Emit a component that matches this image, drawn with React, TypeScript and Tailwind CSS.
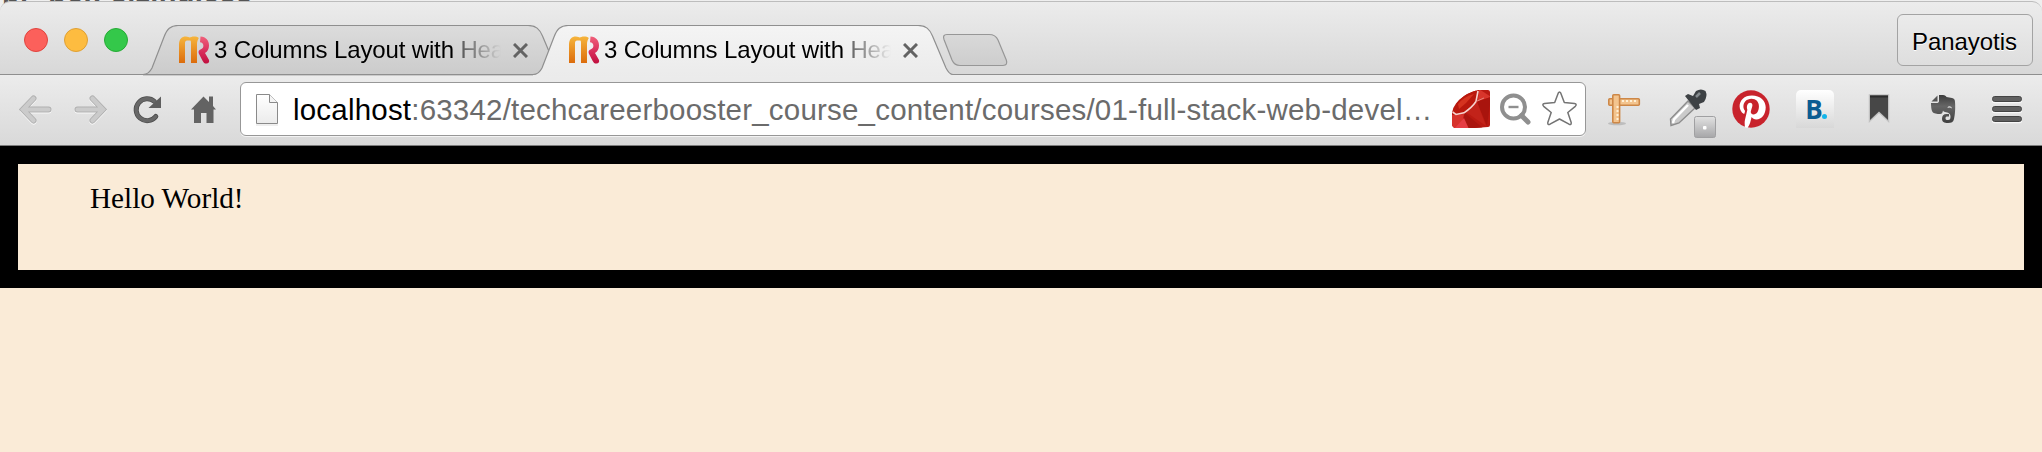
import React from "react";

function Favicon() {
  return (
    <svg className="block h-[28px] w-[31px] shrink-0" viewBox="0 0 31 28">
      <defs>
        <linearGradient id="mo" x1="0" y1="0" x2="0" y2="1">
          <stop offset="0" stopColor="#f6b53c" />
          <stop offset="1" stopColor="#dc6c0c" />
        </linearGradient>
        <linearGradient id="rp" x1="0" y1="0" x2="0" y2="1">
          <stop offset="0" stopColor="#f0607a" />
          <stop offset="0.6" stopColor="#d62a58" />
          <stop offset="1" stopColor="#c0103f" />
        </linearGradient>
      </defs>
      <path
        d="M0 27V8.500C0 3 3 .4 6.800 .4C9 .4 10 1.200 10.700 1.600C11.600 1 13 .4 15 .4C17 .4 18.600 .8 19.800 2C18.600 4 18 6 18 8V27H12V7C12 5 11.600 4.500 11 4.500H8C6.800 4.500 6 5.500 6 7V27Z"
        fill="url(#mo)"
      />
      <path
        d="M21.500 .6C27 1 30 4.500 30 9.500C30 13 28.500 15.600 26 17L30 24C30.600 26 29.500 27.600 27.500 27.600C25.500 27.600 24.500 26.700 23.700 25L19.800 17.500C19 15.500 20 14 21.500 13.500C23.500 12.700 24.400 11.500 24.400 9.700C24.400 7.500 23 6.500 21 6.300Z"
        fill="url(#rp)"
      />
    </svg>
  );
}

function Tab({ active = false }: { active?: boolean }) {
  return (
    <div className={active ? "relative z-10 -ml-[30px] h-[51px] w-[420px]" : "relative h-[51px] w-[420px]"}>
      <svg className="absolute inset-0 h-[51px] w-[420px]" viewBox="0 0 420 51">
        <defs>
          <linearGradient id="tabOff" x1="0" y1="0" x2="0" y2="1">
            <stop offset="0" stopColor="#dcdcdc" />
            <stop offset="1" stopColor="#cbcbcb" />
          </linearGradient>
          <linearGradient id="tabOn" x1="0" y1="0" x2="0" y2="1">
            <stop offset="0" stopColor="#f4f4f4" />
            <stop offset="1" stopColor="#ebebeb" />
          </linearGradient>
        </defs>
        <path
          d="M0 49.500C5 49.500 7 47 9 43L21 12C24 4 27.500 .5 35 .5H385C393 .5 396.500 4 399.500 11L413 43C415 47 417 49.500 420 49.500V51H0Z"
          fill={active ? "url(#tabOn)" : "url(#tabOff)"}
        />
        <path
          d="M0 49.500C5 49.500 7 47 9 43L21 12C24 4 27.500 .5 35 .5H385C393 .5 396.500 4 399.500 11L413 43C415 47 417 49.500 420 49.500"
          fill="none"
          stroke="#8f8f8f"
          strokeWidth="1.200"
        />
        {!active && <path d="M0 49.500H420" stroke="#8f8f8f" strokeWidth="1.200" />}
      </svg>
      <div className="relative flex h-[51px] items-start pl-[36px] pt-[10.5px]">
        <Favicon />
        <span className="ml-[4px] w-[287px] overflow-hidden whitespace-nowrap bg-linear-to-r from-black from-[84%] via-[#00000088] via-[87%] to-transparent bg-clip-text text-[24px] leading-[28px] tracking-[-0.14px] text-transparent">
          3 Columns Layout with Hea
        </span>
        <svg className="ml-[12px] mt-[7px] h-[15px] w-[15px]" viewBox="0 0 15 15">
          <path d="M1 1L14 14M14 1L1 14" stroke="#636363" strokeWidth="3" />
        </svg>
      </div>
    </div>
  );
}

function BackIcon() {
  return (
    <svg className="h-[70px] w-[62px]" viewBox="0 75 62 70">
      <path d="M33.500 98.500L23 109.500L33.500 120.500M24 109.500H48.500" fill="none" stroke="#fafafa" strokeWidth="6" strokeLinecap="round" strokeLinejoin="round" transform="translate(0 1)" />
      <path d="M33.500 98.500L23 109.500L33.500 120.500M24 109.500H48.500" fill="none" stroke="#b0b0b0" strokeWidth="6" strokeLinecap="round" />
      <path d="M33.500 98.500L23 109.500L33.500 120.500M24 109.500H48.500" fill="none" stroke="#cbcbcb" strokeWidth="4.200" strokeLinecap="round" />
    </svg>
  );
}

function ForwardIcon() {
  return (
    <svg className="h-[70px] w-[58px]" viewBox="62 75 58 70">
      <path d="M92.500 98.500L103 109.500L92.500 120.500M102 109.500H77.500" fill="none" stroke="#fafafa" strokeWidth="6" strokeLinecap="round" transform="translate(0 1)" />
      <path d="M92.500 98.500L103 109.500L92.500 120.500M102 109.500H77.500" fill="none" stroke="#b0b0b0" strokeWidth="6" strokeLinecap="round" />
      <path d="M92.500 98.500L103 109.500L92.500 120.500M102 109.500H77.500" fill="none" stroke="#cbcbcb" strokeWidth="4.200" strokeLinecap="round" />
    </svg>
  );
}

function ReloadIcon() {
  return (
    <svg className="h-[70px] w-[56px]" viewBox="120 75 56 70">
      <path d="M155.800 116.500A11 11 0 1 1 154.500 101.500" fill="none" stroke="#4c4c4c" strokeWidth="5" strokeLinecap="round" />
      <path d="M155.800 116.500A11 11 0 1 1 154.500 101.500" fill="none" stroke="#686868" strokeWidth="3.400" strokeLinecap="round" />
      <path d="M161 96.500V108H148.500Z" fill="#5e5e5e" />
    </svg>
  );
}

function HomeIcon() {
  return (
    <svg className="h-[70px] w-[64px]" viewBox="176 75 64 70">
      <path d="M191 109.500L203.500 96.500L209 102V96.500H213V106L216 109.500H213.500V123H206.500V113H201V123H194V109.500Z" fill="#636363" />
    </svg>
  );
}

function PageIcon() {
  return (
    <svg className="h-[34px] w-[26px] shrink-0" viewBox="254 92 26 34">
      <defs>
        <linearGradient id="pg" x1="0" y1="0" x2="0" y2="1">
          <stop offset="0" stopColor="#ffffff" />
          <stop offset="1" stopColor="#ebebeb" />
        </linearGradient>
      </defs>
      <path d="M256 125H278" stroke="#dedede" />
      <path d="M256.500 94.500H269.500L277.500 102.500V123.500H256.500Z" fill="url(#pg)" stroke="#8a8a8a" />
      <path d="M269.500 94.500V102.500H277.500" fill="#f4f4f4" stroke="#8a8a8a" />
    </svg>
  );
}

function OmniboxIcons() {
  return (
    <svg className="h-[50px] w-[140px] shrink-0" viewBox="1445 84 140 50">
      <defs>
        <clipPath id="gem">
          <path d="M1473 91.500L1478 90H1488Q1490 90 1490 92V125Q1490 127 1488 127L1474 128H1455Q1452 127 1452 124V113Q1453 107 1456 103.500Q1463 95 1473 91.500Z" />
        </clipPath>
      </defs>
      <g clipPath="url(#gem)">
        <rect x="1451" y="89" width="40" height="40" fill="#b91a12" />
        <path d="M1452 113L1460 97L1476 90L1477 101L1465 112L1456 114Z" fill="#b9180d" />
        <path d="M1458 104Q1464 96.500 1474 94L1466 103L1459 109Z" fill="#d5331f" />
        <path d="M1479 89L1491 97L1478 101Z" fill="#d8352b" />
        <path d="M1477 102L1491 97L1487 126Z" fill="#a9140d" />
        <path d="M1466 112L1477 102L1486 126Z" fill="#c2231a" />
        <path d="M1465 113L1484 129H1461Z" fill="#aa150f" />
        <path d="M1452 115L1464 114L1461 129H1452Z" fill="#d7332c" />
        <path d="M1454 129L1464 118L1469 129Z" fill="#e63e44" />
        <path d="M1452.500 112L1456 114.500L1464 112.800Q1472 107.500 1476 101.500L1478 91" fill="none" stroke="#f6d3ce" strokeWidth="1.600" />
        <path d="M1476 101.500L1484 98" fill="none" stroke="#e58a80" strokeWidth="1" />
      </g>
      <circle cx="1513.500" cy="107" r="11.500" fill="none" stroke="#8f8f8f" strokeWidth="4" />
      <path d="M1508.500 107H1518.500" stroke="#8f8f8f" strokeWidth="2.400" />
      <path d="M1521.500 115.500L1528 122" stroke="#8f8f8f" strokeWidth="5" strokeLinecap="round" />
      <path
        d="M1558.200 93.200Q1559.500 90.800 1560.800 93.200L1564.300 102.500L1574.500 103.500Q1577.300 104.200 1575.300 106.300L1567.800 112.500L1571.200 122.500Q1571.500 125.400 1569 124.200L1559.500 119L1550 124.200Q1547.500 125.400 1547.800 122.500L1551.200 112.500L1543.700 106.300Q1541.700 104.200 1544.500 103.500L1554.700 102.500Z"
        fill="#fff"
        stroke="#747474"
        strokeWidth="1.500"
        strokeLinejoin="round"
      />
    </svg>
  );
}

function RulerIcon() {
  return (
    <svg className="h-[70px] w-[64px]" viewBox="1592 75 64 70">
      <ellipse cx="1617" cy="123.500" rx="9" ry="1.800" fill="#bdbdbd" />
      <rect x="1608.800" y="98.800" width="30.500" height="6.500" rx="1" fill="#f3c48e" stroke="#cd8747" strokeWidth="1.600" />
      <rect x="1612.800" y="94.800" width="6.800" height="28" rx="1" fill="#f3c48e" stroke="#cd8747" strokeWidth="1.600" />
      <path d="M1622 101H1638" stroke="#fff0d6" strokeWidth="2" strokeDasharray="2 2" />
      <path d="M1617.500 106V121" stroke="#fff0d6" strokeWidth="2" strokeDasharray="2 2" />
    </svg>
  );
}

function DropperIcon() {
  return (
    <svg className="h-[70px] w-[64px]" viewBox="1656 75 64 70">
      <defs>
        <linearGradient id="badge" x1="0" y1="0" x2="0" y2="1">
          <stop offset="0" stopColor="#e2e2e2" />
          <stop offset="1" stopColor="#a6a6a8" />
        </linearGradient>
      </defs>
      <path d="M1688 101L1695 108L1679 123L1671 125.500L1670.500 119Z" fill="#cacaca" stroke="#8c8c8c" strokeWidth="1.400" />
      <path d="M1688 105L1674 119.500L1673 123" fill="none" stroke="#fff" strokeWidth="2.500" />
      <path d="M1685 96L1688 94L1693 96L1696 91Q1701 88 1705.500 91Q1708 96 1704 102L1699 104L1700 108L1696 110Z" fill="#3d4144" />
      <path d="M1696 97L1700 93" stroke="#858b8f" strokeWidth="2.500" />
      <rect x="1694.500" y="116.500" width="21" height="21" rx="2" fill="url(#badge)" stroke="#a0a0a2" />
      <rect x="1703" y="126" width="3.500" height="3.500" rx="1" fill="#fff" />
    </svg>
  );
}

function PinterestIcon() {
  return (
    <svg className="h-[70px] w-[64px]" viewBox="1720 75 64 70">
      <circle cx="1751" cy="109" r="18.700" fill="#c8232c" />
      <path
        transform="translate(1732 90) scale(1.583)"
        fill="#fff"
        d="M12.600 3.400C7.700 3.400 4.800 6.500 4.800 10.300c0 1.800 1 4 2.500 4.700.4.200.5 0 .6-.3l.3-1.200c.1-.2 0-.3-.1-.5-.5-.6-.9-1.600-.9-2.600 0-2.600 2-4.900 5.100-4.900 2.900 0 4.700 1.900 4.700 4.700 0 3-1.400 5.200-3.400 5.200-1.100 0-2-.9-1.700-2 .3-1.300 1-2.800 1-3.800 0-.9-.5-1.600-1.400-1.600-1.200 0-2.100 1.200-2.100 2.800 0 1 .3 1.700.3 1.700l-1.500 6.300c-.4 1.500-.1 3.600 0 4.700l1.600.5c.6-.9 1.300-2.200 1.700-3.500l.9-3.400c.5.900 1.700 1.500 2.900 1.500 3.500 0 6-3.300 6-7.700 0-4-3.300-7.500-8.700-7.500z"
      />
    </svg>
  );
}

function BookingIcon() {
  return (
    <div className="flex h-[70px] w-[64px] items-start pl-[12px] pt-[15px]">
      <div className="flex h-[38px] w-[38px] items-center justify-center rounded-t-[5px] bg-linear-to-b from-white to-[#d8d8d8]">
        <span className="flex items-baseline pl-[2px] font-['Open_Sans'] text-[26px] leading-[38px] font-bold text-[#0b5c92]">
          B<span className="-ml-px h-[5px] w-[5px] rounded-full bg-[#13b5ea]" />
        </span>
      </div>
    </div>
  );
}

function BookmarkIcon() {
  return (
    <svg className="h-[70px] w-[64px]" viewBox="1848 75 64 70">
      <path d="M1870 95.500H1888V120L1879 111.500L1870 120Z" fill="#474747" stroke="#c2c2c2" strokeWidth="2.500" paintOrder="stroke" />
      <path d="M1870 96.500H1888" stroke="#2c2c2c" strokeWidth="2" />
    </svg>
  );
}

function EvernoteIcon() {
  return (
    <svg className="h-[70px] w-[64px]" viewBox="1912 75 64 70">
      <defs>
        <linearGradient id="ev" x1="0" y1="0" x2="0" y2="1">
          <stop offset="0" stopColor="#3c3c3c" />
          <stop offset="0.400" stopColor="#666666" />
          <stop offset="1" stopColor="#404040" />
        </linearGradient>
      </defs>
      <path
        fill="url(#ev)"
        d="M1939 95H1943C1945 95 1946 96 1946.500 97L1952 98C1954 98.500 1955 99.500 1955 102C1955.500 108 1955 115 1954 119C1953.300 122 1951.500 123 1948 123C1944 123 1942 122 1942 118.500C1942 116 1943.500 114 1946.500 114H1949V116.500H1947.500C1946 116.500 1945.500 117.200 1945.500 118.200C1945.500 119.700 1946.500 120 1948 120C1950 120 1950.500 119 1950.500 116.500C1950.500 113.500 1948 112.500 1945 112C1944 111.800 1943.500 111.500 1943 110.500C1942.500 113 1942 114 1940 114C1937 114 1933.500 113.500 1932.500 112C1931.300 110 1931 106 1931 103H1936.500C1938 103 1939 102.500 1939 101Z"
      />
      <path d="M1931.500 101.500L1937.500 95.500V101.500Z" fill="#555" />
      <path d="M1947.500 108C1947.700 105.500 1951.500 105.500 1952 108.500Q1949.500 107 1947.500 108Z" fill="#dedede" />
    </svg>
  );
}

function MenuIcon() {
  return (
    <svg className="h-[70px] w-[66px]" viewBox="1976 75 66 70">
      {[96.5, 106.5, 116.5].map((y) => (
        <g key={y}>
          <rect x="1992" y={y + 0.8} width="30" height="6" rx="2.500" fill="#f8f8f8" />
          <rect x="1992.500" y={y} width="29" height="5" rx="2.200" fill="#606060" stroke="#444" />
        </g>
      ))}
    </svg>
  );
}

export default function App() {
  return (
    <div className="flex h-[452px] w-[2042px] flex-col overflow-hidden bg-[#faebd7] font-['Liberation_Sans',Arial,sans-serif] text-black">
      <header className="relative flex h-[75px] shrink-0 bg-[#e4e4e4]">
        <div className="absolute top-0 left-0 h-[12px] w-full overflow-hidden bg-[#efefef]">
          <span className="absolute top-[-24px] left-[2px] text-[29px] leading-[32px] font-bold tracking-[0.3px] whitespace-pre text-[#555]">pr  box-sizing.css</span>
        </div>
        <div className="relative mt-px flex h-[74px] w-full rounded-t-[10px] border-t border-[#bdbdbd] border-b border-b-[#8f8f8f] bg-linear-to-b from-[#ececec] to-[#d8d8d8]">
          <div className="flex w-[143px] gap-[16px] pt-[26px] pl-[24px]">
            <span className="h-[24px] w-[24px] rounded-full border border-[#e0443e] bg-[#fc605b]" />
            <span className="h-[24px] w-[24px] rounded-full border border-[#dfa034] bg-[#fdbc40]" />
            <span className="h-[24px] w-[24px] rounded-full border border-[#26ab35] bg-[#34c84a]" />
          </div>
          <div className="flex h-[51px] pt-[23px]">
            <Tab />
            <Tab active />
          </div>
          <svg className="mt-[30px] -ml-[12px] h-[36px] w-[68px]" viewBox="942 32 68 36">
            <defs>
              <linearGradient id="nt" x1="0" y1="0" x2="0" y2="1">
                <stop offset="0" stopColor="#d9d9d9" />
                <stop offset="1" stopColor="#cdcdcd" />
              </linearGradient>
            </defs>
            <path d="M948 34.500H990C995 34.500 997.500 36.500 999 40L1007.300 60C1008.500 63.500 1007.500 65.500 1004 65.500H961C957 65.500 954.500 63.500 953 60L945 39.500C944 36.500 944.500 34.500 948 34.500Z" fill="url(#nt)" stroke="#979797" strokeWidth="1.200" />
          </svg>
          <div className="ml-auto mt-[12px] mr-[9px] flex h-[52px] w-[136px] items-center justify-center rounded-[6px] border border-[#a3a3a3] bg-linear-to-b from-[#ebebeb] to-[#dedede] pt-[3px] pr-px text-[24px] tracking-[-0.05px] [text-shadow:0_1px_0_#fff]">
            Panayotis
          </div>
        </div>
      </header>

      <nav className="flex h-[71px] shrink-0 border-b border-[#7c7c7c] bg-linear-to-b from-[#ececec] to-[#d9d9d9]">
        <BackIcon />
        <ForwardIcon />
        <ReloadIcon />
        <HomeIcon />
        <div className="mt-[7px] flex h-[54px] w-[1346px] shrink-0 items-center rounded-[6px] border border-[#979797] bg-white pl-[13px] shadow-[0_1px_0_#f3f3f3]">
          <PageIcon />
          <span className="ml-[13px] w-[1152px] overflow-hidden pt-[2px] whitespace-nowrap text-[29.5px] leading-[50px] tracking-[0.2px] text-[#6b6b6b]">
            <span className="text-black">localhost</span>:63342/techcareerbooster_course_content/courses/01-full-stack-web-devel…
          </span>
          <OmniboxIcons />
        </div>
        <div className="ml-[6px] flex">
          <RulerIcon />
          <DropperIcon />
          <PinterestIcon />
          <BookingIcon />
          <BookmarkIcon />
          <EvernoteIcon />
          <MenuIcon />
        </div>
      </nav>

      <main className="h-[142px] shrink-0 border-[18px] border-black bg-[#faebd7] pt-[17px] pl-[72px] font-['Liberation_Serif','Times_New_Roman',serif] text-[29.2px] leading-[34px]">
        Hello World!
      </main>
    </div>
  );
}
